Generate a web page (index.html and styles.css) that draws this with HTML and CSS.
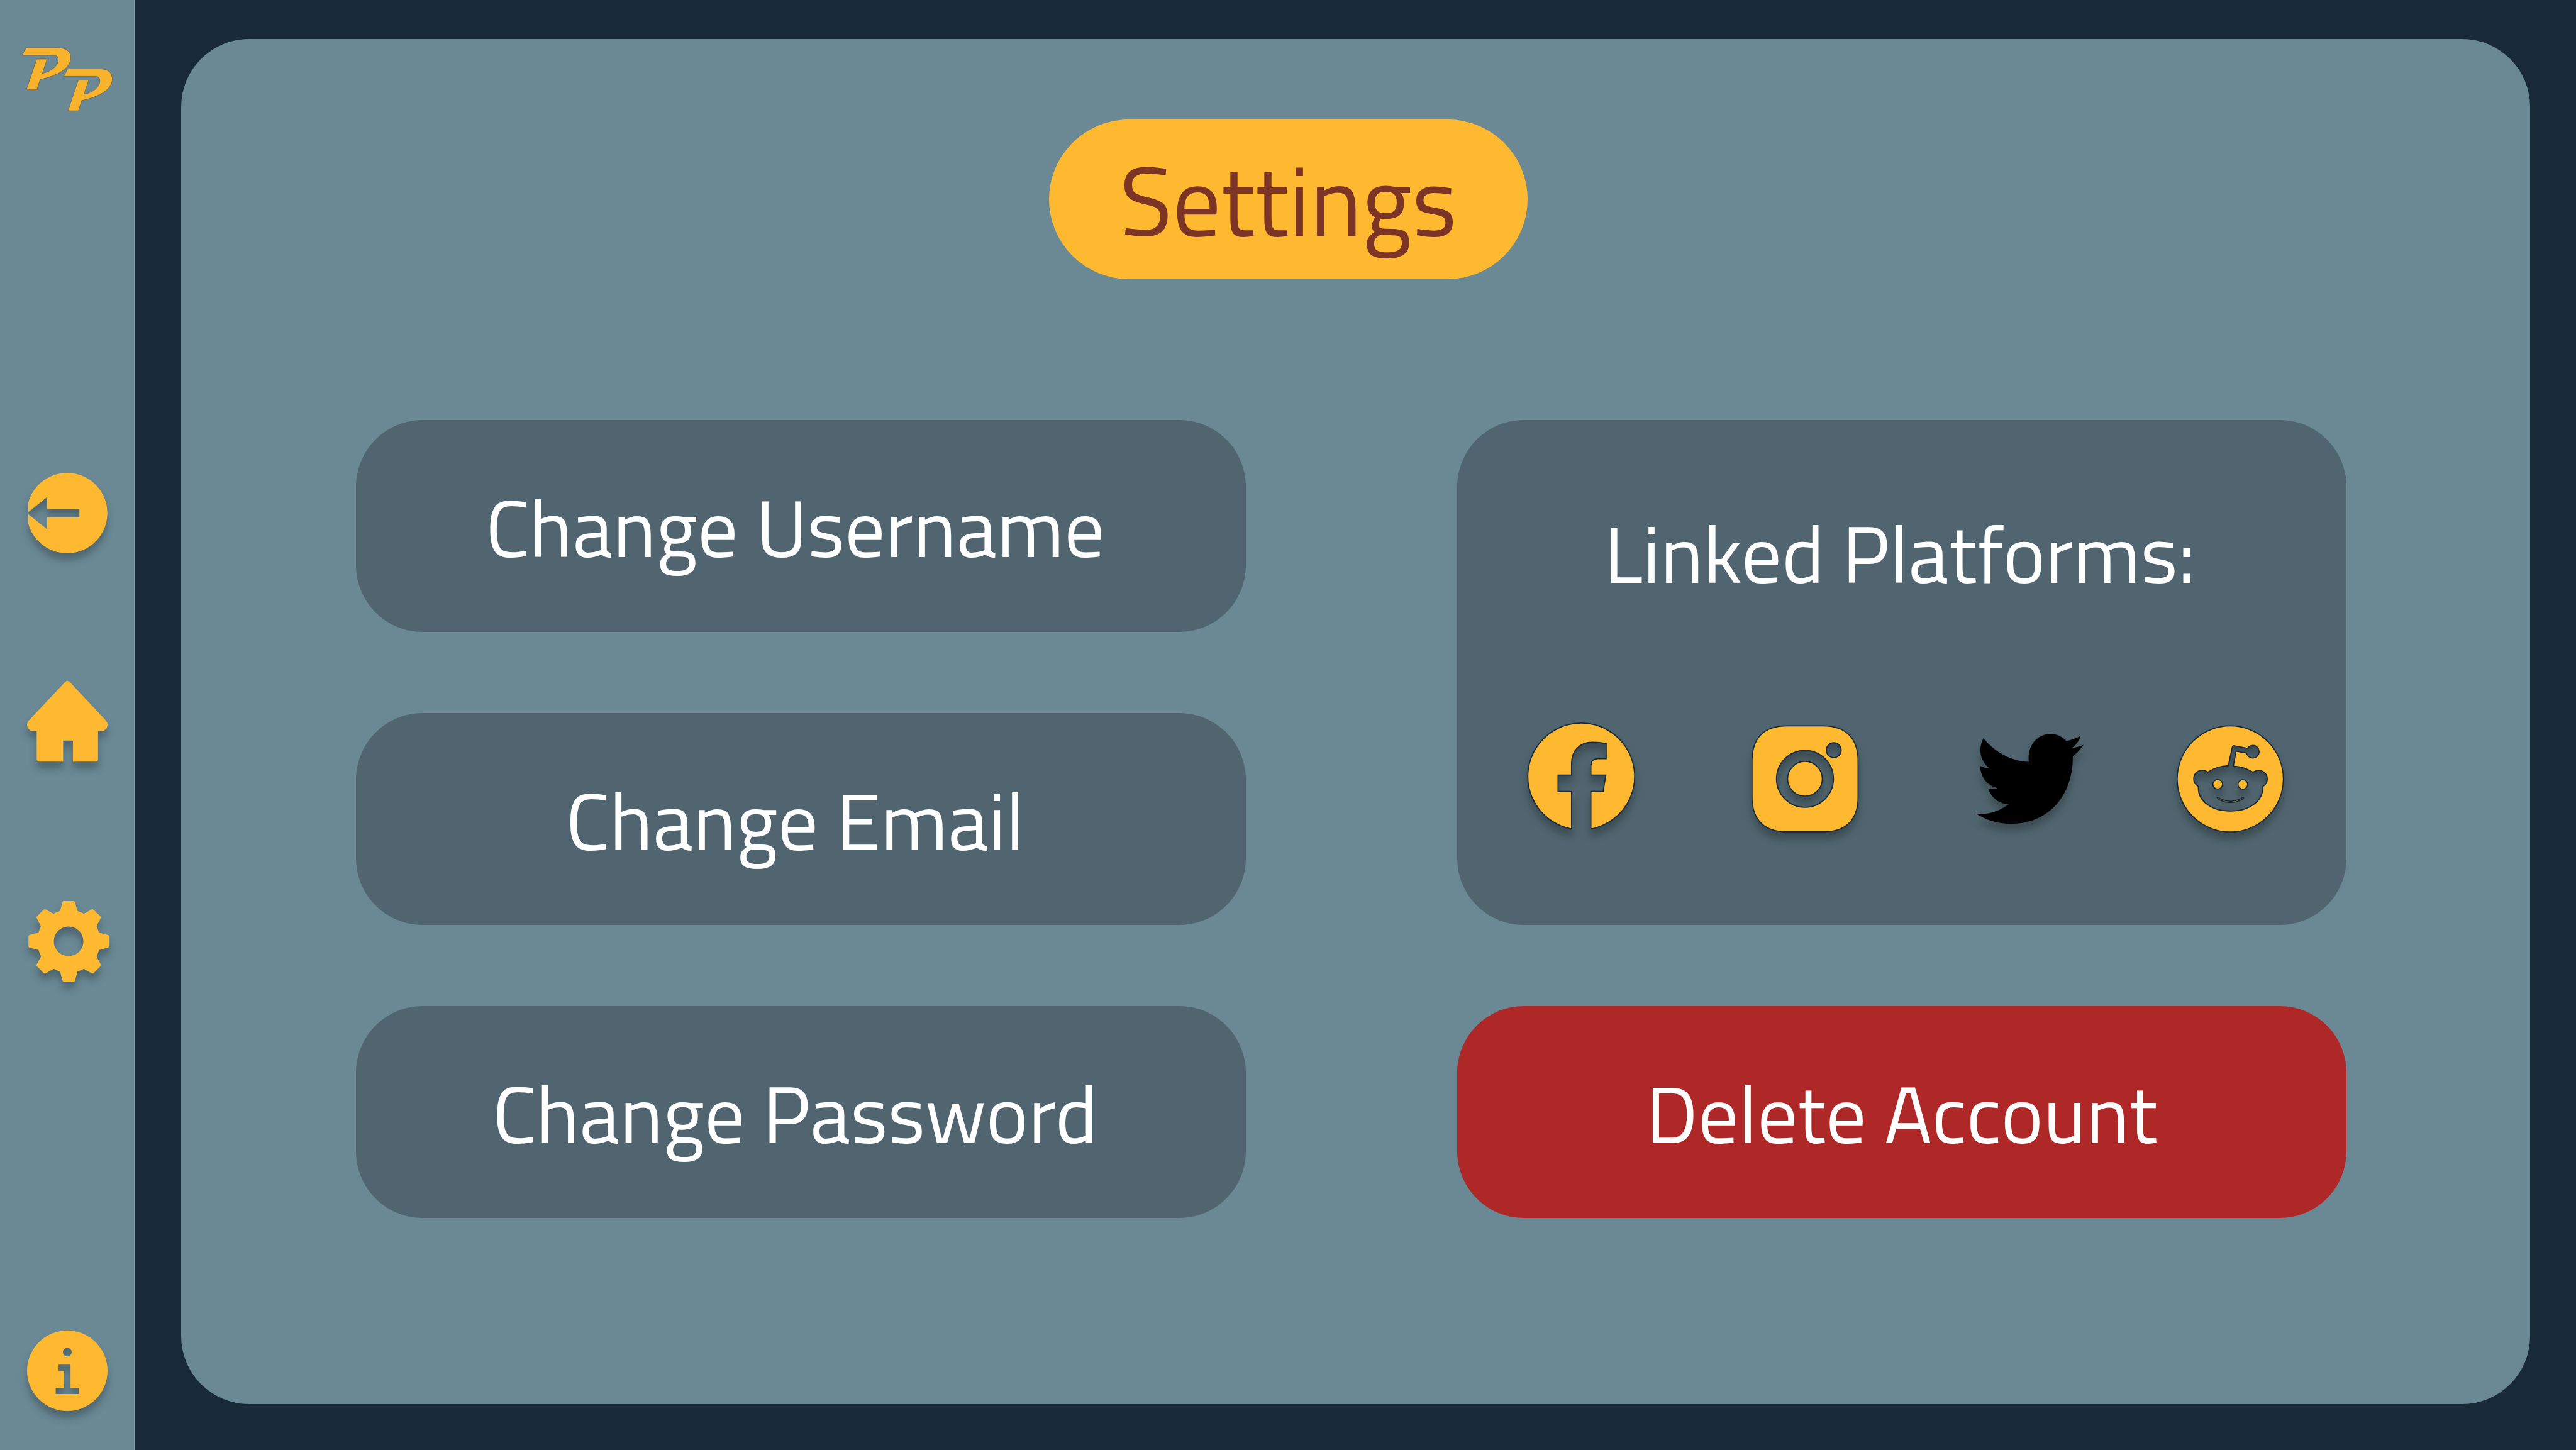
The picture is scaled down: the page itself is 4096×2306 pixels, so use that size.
FILE: index.html
```html
<!DOCTYPE html>
<html lang="en">
<head>
<meta charset="utf-8">
<meta name="viewport" content="width=device-width, initial-scale=1">
<title>Settings</title>
<link rel="stylesheet" href="styles.css">
</head>
<body>
<nav class="sidebar" aria-label="Main">
  <a class="logo" href="#" aria-label="PP">
    <svg viewBox="136 175 562 394">
      <defs>
        <path id="mark" d="M162 175H360C410 175 438 198 438 238C438 300 360 348 249 371L228 435H163L227 245H292L262 333C320 322 361 285 361 250C361 230 352 221 330 221H136Z"/>
      </defs>
      <use href="#mark"/>
      <use href="#mark" x="258" y="131"/>
    </svg>
  </a>
  <a class="nav-link nav-back" href="#back" aria-label="Back">
    <svg viewBox="167 111 500 500"><path d="M174 298A250 250 0 1 1 174 424V368L291 461V387H492V336H291V262L174 355Z"/></svg>
  </a>
  <a class="nav-link nav-home" href="#home" aria-label="Home">
    <svg viewBox="168 114 500 500"><path d="M405 120Q418 107 433 120L658 360Q668 370 668 387A38 38 0 0 1 632 425H609V597Q609 615 591 615H453V484H392V615H246Q228 615 228 597V425H205A38 38 0 0 1 168 387Q168 370 180 358Z"/></svg>
  </a>
  <a class="nav-link nav-settings" href="#settings" aria-label="Settings">
    <svg viewBox="168 101 500 500"><path fill-rule="evenodd" d="M373 163L388 107Q390 101 396 101H458Q463 101 465 107L481 163Q501 169 520 180L570 153Q576 150 581 155L624 197Q628 202 625 207L599 257Q610 276 615 297L671 312Q677 314 677 320V382Q677 388 671 390L615 405Q610 426 599 445L625 494Q628 500 624 505L581 549Q576 553 570 550L520 522Q502 533 481 539L465 597Q463 602 457 602H397Q391 602 389 597L373 539Q353 533 334 522L283 550Q277 553 272 549L229 505Q225 500 228 495L255 445Q245 426 239 405L183 390Q177 388 177 382V320Q177 314 183 312L239 297Q245 276 254 257L228 207Q225 201 229 197L271 155Q277 150 283 153L332 180Q352 168 373 163ZM334 351A92 92 0 0 0 518 351A92 92 0 0 0 334 351Z"/></svg>
  </a>
  <a class="nav-link nav-info" href="#info" aria-label="Information">
    <svg viewBox="167 98 500 500"><path fill-rule="evenodd" d="M167 348A250 250 0 0 1 667 348A250 250 0 0 1 167 348ZM390 232A27 27 0 0 0 444 232A27 27 0 0 0 390 232ZM363 310H437V453H489V493H345V453H397V350H363Z"/></svg>
  </a>
</nav>
<main class="panel">
  <h1 class="title">Settings</h1>
  <div class="options">
    <button class="option" type="button">Change Username</button>
    <button class="option" type="button">Change Email</button>
    <button class="option" type="button">Change Password</button>
    <section class="linked" aria-labelledby="linked-title">
      <h2 class="linked-title" id="linked-title">Linked Platforms:</h2>
      <div class="platforms">
        <a class="platform" href="#facebook" aria-label="Facebook">
          <svg viewBox="111 102 664 688"><path d="M384 768A332 332 0 1 1 504 768V535H580L597 433H504V375Q504 331 548 331H599V236Q555 229 515 229C430 229 384 285 384 360V433H300V535H384Z"/></svg>
        </a>
        <a class="platform" href="#instagram" aria-label="Instagram">
          <svg viewBox="127 102 664 688"><path fill-rule="evenodd" d="M350 127H570C710 127 789 200 789 345V570C789 710 715 786 570 786H350C205 786 130 710 130 570V345C130 200 205 127 350 127ZM282 456A177 177 0 0 0 636 456A177 177 0 0 0 282 456ZM592 278A46 46 0 0 0 684 278A46 46 0 0 0 592 278Z"/><circle cx="459" cy="456" r="108"/></svg>
        </a>
        <a class="platform platform-dark" href="#twitter" aria-label="Twitter">
          <svg viewBox="140 102 664 688"><path d="M186 204C260 295 360 346 468 351C455 250 520 177 603 177C640 177 675 192 702 221C733 215 762 205 790 189C780 222 760 248 732 266C760 262 785 255 808 245C790 272 768 296 741 316C745 560 590 736 355 736C275 736 205 715 140 673C215 680 285 658 342 614C285 612 235 575 216 517C236 520 256 519 276 514C210 500 166 445 166 376C185 386 205 391 228 392C165 350 150 270 186 204Z"/></svg>
        </a>
        <a class="platform" href="#reddit" aria-label="Reddit">
          <svg viewBox="127 102 664 688"><path fill-rule="evenodd" d="M130 457A330 330 0 0 1 790 457A330 330 0 0 1 130 457ZM448 374C400 377 357 390 321 415C277 385 233 415 233 457C233 477 244 494 262 503C255 590 340 657 461 657C582 657 668 590 662 503C680 494 690 477 690 457C690 415 645 387 601 415C565 392 525 380 479 377L496 284L562 296A39 39 0 1 0 567 267L486 251Q474 248 472 262Z"/><circle cx="382" cy="490" r="30"/><circle cx="538" cy="491" r="30"/><path d="M380 570Q460 620 540 571Q546 575 541 580Q460 628 382 580Q377 574 380 570Z"/></svg>
        </a>
      </div>
    </section>
    <button class="option delete" type="button">Delete Account</button>
  </div>
</main>
</body>
</html>
```
FILE: styles.css
```css
:root {
  --navy: #182a38;
  --teal: #6a8995;
  --slate: #50656f;
  --amber: #feb931;
  --brown: #7c3425;
  --red: #af2828;
}

* {
  box-sizing: border-box;
}

body {
  margin: 0;
  min-height: 100vh;
  display: flex;
  background: var(--navy);
  font-family: "Titillium Web", "Open Sans", sans-serif;
  font-weight: 400;
}

svg {
  display: block;
  width: 100%;
  height: 100%;
  overflow: visible;
}

.sidebar {
  width: 214px;
  flex: none;
  display: flex;
  flex-direction: column;
  align-items: center;
  padding: 76px 0 62px;
  background: var(--teal);
  border-right: 1px solid #84a0aa;
}

.logo {
  width: 144px;
  height: 101px;
  fill: #f9b32c;
  stroke: #6b5f4c;
  stroke-width: 3;
}

.nav-link {
  width: 128px;
  height: 128px;
  fill: var(--amber);
  filter: drop-shadow(0 11px 6px rgba(0, 0, 0, 0.25));
}

.nav-back {
  margin-top: 575px;
}

.nav-home {
  margin-top: 203px;
}

.nav-settings {
  margin-top: 222px;
}

.nav-info {
  margin-top: auto;
}

.panel {
  flex: 1;
  display: flex;
  flex-direction: column;
  margin: 62px 73px 73px 74px;
  padding: 128px 292px 128px 278px;
  border-radius: 108px;
  background: var(--teal);
}

.title {
  align-self: center;
  margin: 0 200px 0 0;
  padding: 2px 112px 0;
  border-radius: 128px;
  background: var(--amber);
  color: var(--brown);
  font-size: 154px;
  font-weight: inherit;
  line-height: 252px;
}

.options {
  display: grid;
  grid-template-columns: 1fr 1fr;
  grid-template-rows: repeat(3, minmax(337px, auto));
  grid-auto-flow: column;
  gap: 129px 336px;
  margin-top: 224px;
}

.option {
  padding: 4px 18px 0 0;
  border: 0;
  border-radius: 106px;
  background: var(--slate);
  color: #fff;
  font: inherit;
  font-size: 128px;
  cursor: pointer;
}

.linked {
  grid-row: span 2;
  padding: 128px 100px 0 112px;
  border-radius: 106px;
  background: var(--slate);
  color: #fff;
}

.linked-title {
  margin: 0;
  padding-right: 18px;
  font-size: 128px;
  font-weight: inherit;
  line-height: 168px;
  text-align: center;
}

.platforms {
  display: flex;
  justify-content: space-between;
  margin-top: 184px;
}

.platform {
  width: 170px;
  height: 176px;
  fill: var(--amber);
  stroke: var(--navy);
  stroke-width: 7;
  filter: drop-shadow(0 11px 6px rgba(0, 0, 0, 0.25));
}

.platform-dark {
  margin-right: -38px;
  fill: #000;
  stroke: none;
}

.delete {
  padding-right: 0;
  background: var(--red);
}
```
